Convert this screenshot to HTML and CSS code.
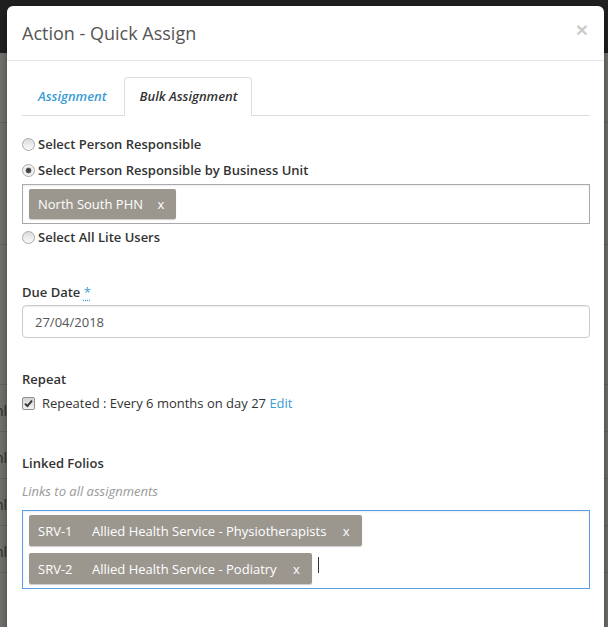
FILE: index.html
```html
<!DOCTYPE html>
<html lang="en">
<head>
    <meta charset="UTF-8">
    <meta name="viewport" content="width=device-width, initial-scale=1.0">
    <title>Action - Quick Assign</title>
    <link rel="stylesheet" href="styles.css">
</head>
<body>
    <div class="page">
        <div class="navbar"></div>
        <div class="page-body">
            <div class="row row-a"></div>
            <div class="row row-b"></div>
            <div class="row row-c"></div>
            <div class="row"><span class="cell">nl</span></div>
            <div class="row"><span class="cell">nl</span></div>
            <div class="row"><span class="cell">nl</span></div>
            <div class="row"><span class="cell">nl</span></div>
        </div>
    </div>

    <div class="modal">
        <div class="modal-header">
            <span class="close">&times;</span>
            <h4 class="modal-title">Action - Quick Assign</h4>
        </div>
        <div class="modal-body">
            <ul class="nav-tabs">
                <li><a href="#">Assignment</a></li>
                <li class="active"><a href="#">Bulk Assignment</a></li>
            </ul>

            <div class="choices">
                <label class="choice"><input type="radio" name="who"> Select Person Responsible</label>
                <label class="choice choice-unit"><input type="radio" name="who" checked> Select Person Responsible by Business Unit</label>
                <div class="tag-box">
                    <span class="tag">North South PHN <span class="tag-remove">x</span></span>
                </div>
                <label class="choice choice-last"><input type="radio" name="who"> Select All Lite Users</label>
            </div>

            <div class="form-group due-date">
                <label class="control-label">Due Date <abbr class="required" title="required">*</abbr></label>
                <input type="text" class="form-control" value="27/04/2018">
            </div>

            <div class="form-group repeat">
                <label class="control-label">Repeat</label>
                <div class="check-row">
                    <span class="check">
                        <svg width="9" height="9" viewBox="0 0 9 9"><path d="M1 4.6 L3.4 7 L8 1.6" fill="none" stroke="#333" stroke-width="1.9"/></svg>
                    </span>
                    <span>Repeated : Every 6 months on day 27 <a href="#" class="link">Edit</a></span>
                </div>
            </div>

            <div class="form-group folios">
                <label class="control-label">Linked Folios</label>
                <p class="help-text">Links to all assignments</p>
                <div class="tag-box tag-box-focus">
                    <div class="tag-line">
                        <span class="tag"><span class="tag-code">SRV-1</span>Allied Health Service - Physiotherapists <span class="tag-remove">x</span></span>
                    </div>
                    <div class="tag-line">
                        <span class="tag"><span class="tag-code">SRV-2</span>Allied Health Service - Podiatry <span class="tag-remove">x</span></span>
                        <span class="caret"></span>
                    </div>
                </div>
            </div>
        </div>
    </div>
</body>
</html>
```

FILE: styles.css
```css
body {
    margin: 0;
    padding: 0;
    font-family: "Open Sans", Arial, sans-serif;
    font-size: 13px;
    color: #333;
    overflow: hidden;
}
.page {
    height: 627px;
    background-color: #72716c;
}
.navbar {
    height: 53px;
    background-color: #202020;
}
.page-body .row {
    height: 46px;
    border-bottom: 1px solid #64635e;
}
.page-body .row-a {
    height: 69px;
}
.page-body .row-b {
    height: 121px;
}
.page-body .row-c {
    height: 139px;
}
.page-body .cell {
    display: block;
    padding: 16px 0 0 0;
    margin-left: -5px;
    color: #2a2a28;
    font-size: 14px;
}

.modal {
    position: absolute;
    top: 6px;
    left: 7px;
    width: 597px;
    height: 640px;
    background: #fff;
    border-radius: 6px 6px 0 0;
    box-shadow: 0 3px 9px rgba(0, 0, 0, 0.4);
}
.modal-header {
    padding: 14px 15px;
    border-bottom: 1px solid #e5e5e5;
}
.modal-title {
    margin: 0;
    font-size: 18px;
    line-height: 26px;
    font-weight: 400;
    color: #555;
}
.close {
    float: right;
    margin-top: -3px;
    margin-right: 1px;
    font-family: "Liberation Sans", Arial, sans-serif;
    font-size: 21px;
    font-weight: bold;
    line-height: 26px;
    color: #000;
    opacity: 0.2;
}
.modal-body {
    padding: 16px 14px 0 15px;
}

.nav-tabs {
    display: flex;
    margin: 0;
    padding: 0;
    list-style: none;
    border-bottom: 1px solid #ddd;
}
.nav-tabs li {
    margin-bottom: -1px;
    margin-right: 1px;
}
.nav-tabs a {
    display: block;
    padding: 10px 15px;
    line-height: 17px;
    border: 1px solid transparent;
    border-radius: 4px 4px 0 0;
    font-style: italic;
    font-weight: 600;
    color: #3a9bd6;
    text-decoration: none;
}
.nav-tabs .active a {
    color: #333;
    background: #fff;
    border-color: #ddd #ddd transparent;
    padding-right: 14px;
}

.choices {
    margin-top: 18px;
}
.choice {
    display: flex;
    align-items: center;
    line-height: 20px;
    margin-bottom: 6px;
    font-weight: 600;
}
.choice-unit {
    margin-bottom: 4px;
}
.choice-last {
    margin-top: 3px;
    margin-bottom: 0;
}
.choice input {
    appearance: none;
    -webkit-appearance: none;
    width: 13px;
    height: 13px;
    margin: 0 3px 0 0;
    border: 1px solid #a9a9a9;
    border-radius: 50%;
    background: linear-gradient(#dcdcdc, #fbfbfb);
}
.choice input:checked {
    background: radial-gradient(circle, #333 0, #555 2.5px, #e6e6e6 3.2px, #fbfbfb 6px);
}

.tag-box {
    border: 1px solid #aaa;
    padding: 4px 6px;
    box-shadow: inset 0 1px 2px rgba(0, 0, 0, 0.08);
}
.tag {
    display: inline-flex;
    align-items: center;
    height: 30px;
    padding: 0 12px 0 9px;
    background: #9b978f;
    color: #fff;
    border-radius: 2px;
    box-shadow: 0 1px 1px rgba(0, 0, 0, 0.2);
    white-space: pre;
}
.tag-remove {
    margin-left: 11px;
}
.tag-code {
    display: inline-block;
    width: 54px;
}

.form-group {
    margin: 0;
}
.control-label {
    display: block;
    font-weight: 600;
    line-height: 20px;
    margin-bottom: 3px;
}
.required {
    color: #3a9bd6;
    font-weight: 400;
    text-decoration: underline dotted;
    text-underline-offset: 3px;
}
.due-date {
    margin-top: 35px;
}
.form-control {
    display: block;
    box-sizing: border-box;
    width: 100%;
    height: 33px;
    padding: 6px 12px;
    border: 1px solid #ccc;
    border-radius: 4px;
    box-shadow: inset 0 1px 1px rgba(0, 0, 0, 0.075);
    font-family: inherit;
    font-size: 13px;
    color: #555;
}

.repeat {
    margin-top: 31px;
}
.repeat .control-label {
    margin-bottom: 4px;
}
.check-row {
    display: flex;
    align-items: center;
    line-height: 20px;
}
.check {
    display: inline-flex;
    align-items: center;
    justify-content: center;
    box-sizing: border-box;
    width: 13px;
    height: 13px;
    margin-right: 7px;
    border: 1px solid #8f8f8f;
    border-radius: 2px;
    background: linear-gradient(#d4d4d4, #f2f2f2);
}
.link {
    color: #3a9bd6;
    text-decoration: none;
}

.folios {
    margin-top: 40px;
}
.help-text {
    margin: 8px 0 9px;
    line-height: 20px;
    font-style: italic;
    color: #999;
}
.tag-box-focus {
    border-color: #5a9ee6;
    padding: 4px 6px;
}
.tag-line {
    display: flex;
    align-items: center;
}
.tag-line + .tag-line {
    margin-top: 7px;
}
.tag-line .tag {
    height: 31px;
}
.tag-line .tag-remove {
    margin-left: 13px;
}
.caret {
    display: inline-block;
    width: 1px;
    height: 16px;
    margin: -8px 0 0 6px;
    background: #333;
}
```
